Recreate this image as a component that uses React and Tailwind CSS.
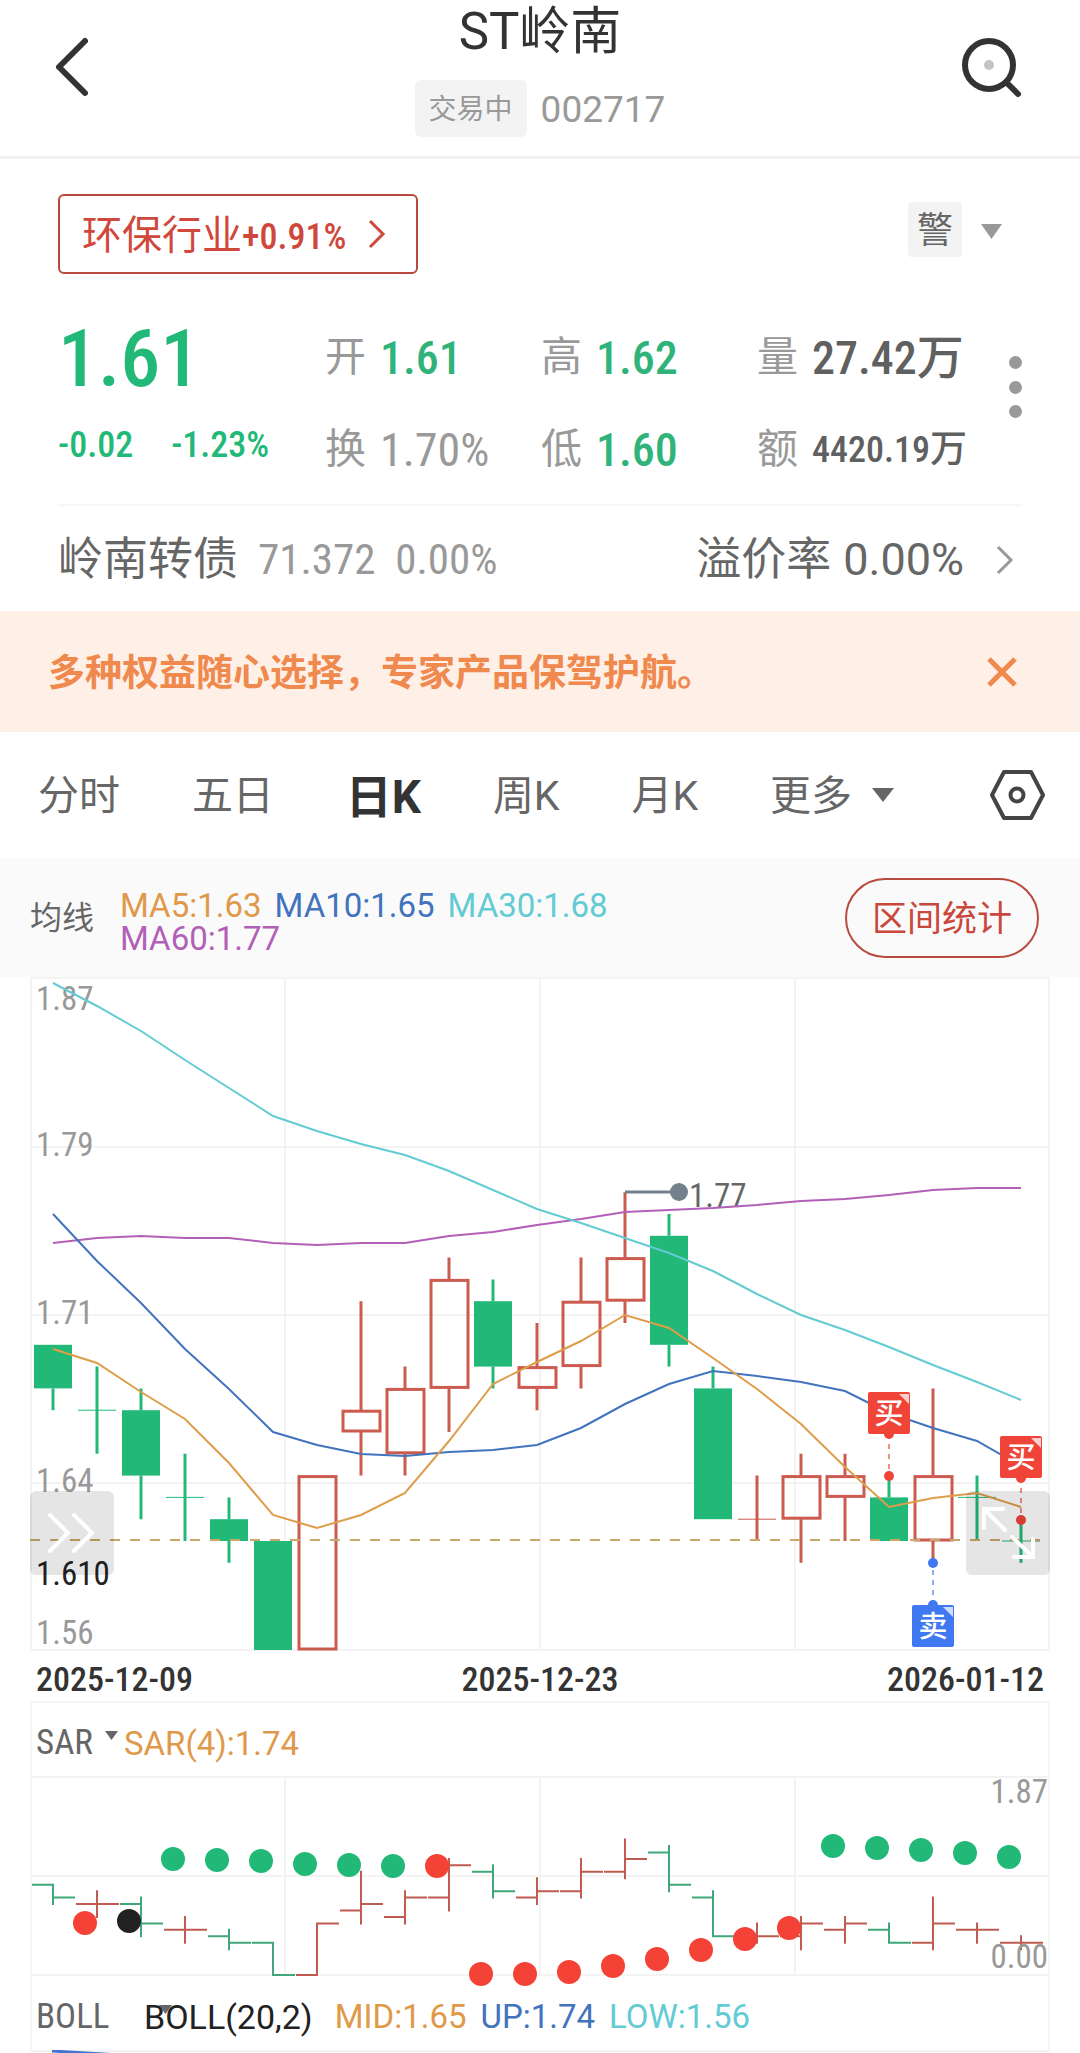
import React from 'react';

const NUM = "[font-family:'Roboto_Condensed','Noto_Sans_CJK_SC',sans-serif]";

const GREEN = '#22b978';
const RED = '#cb5a4f';
const DOT_RED = '#f44336';

const quotes = [
  { label: '开', value: '1.61', color: 'text-[#2fb37b] font-medium' },
  { label: '高', value: '1.62', color: 'text-[#2fb37b] font-medium' },
  { label: '量', value: '27.42', unit: '万', color: 'text-[#606060] font-medium' },
  { label: '换', value: '1.70%', color: 'text-[#999999]' },
  { label: '低', value: '1.60', color: 'text-[#2fb37b] font-medium' },
  { label: '额', value: '4420.19', unit: '万', color: 'text-[#606060] font-medium', small: true },
];

const tabs = ['分时', '五日', '日K', '周K', '月K'];

// open, close, high, low in cents; flat days carry their own direction
const days = [
  [170, 168, 170, 167],
  [167, 167, 169, 165, 'down'],
  [167, 164, 168, 162],
  [163, 163, 165, 161, 'down'],
  [162, 161, 163, 160],
  [161, 156, 161, 156],
  [156, 164, 164, 156],
  [166, 167, 172, 164],
  [165, 168, 169, 164],
  [168, 173, 174, 166],
  [172, 169, 173, 168],
  [168, 169, 171, 167],
  [169, 172, 174, 168],
  [172, 174, 177, 171],
  [175, 170, 176, 169],
  [168, 162, 169, 162],
  [162, 162, 164, 161, 'up'],
  [162, 164, 165, 160],
  [163, 164, 165, 161],
  [163, 161, 164, 161],
  [161, 164, 168, 160],
  [163, 163, 164, 161, 'down'],
  [161, 161, 162, 160, 'down'],
];

const averages = [
  { color: '#b25fb8', points: [266, 261, 259, 261, 261, 266, 268, 266, 266, 259, 255, 248, 242, 235, 233, 231, 228, 224, 222, 218, 213, 211, 211] },
  { color: '#62cbd3', points: [6, 29, 54, 83, 111, 139, 154, 167, 178, 194, 213, 232, 246, 261, 276, 294, 317, 338, 353, 370, 388, 405, 423] },
  { color: '#4273bd', points: [237, 284, 326, 372, 412, 455, 468, 477, 479, 475, 473, 468, 451, 427, 407, 394, 399, 405, 414, 436, 451, 464, 489] },
  { color: '#de9d4a', points: [372, 386, 415, 442, 486, 538, 551, 538, 516, 464, 407, 385, 364, 338, 351, 381, 412, 447, 490, 530, 521, 516, 530] },
];

const sarDots = [
  null,
  [147, DOT_RED],
  [145, '#222222'],
  [83, GREEN],
  [84, GREEN],
  [85, GREEN],
  [88, GREEN],
  [89, GREEN],
  [90, GREEN],
  [90, DOT_RED],
  [198, DOT_RED],
  [198, DOT_RED],
  [196, DOT_RED],
  [190, DOT_RED],
  [183, DOT_RED],
  [174, DOT_RED],
  [163, DOT_RED],
  [152, DOT_RED],
  [70, GREEN],
  [72, GREEN],
  [74, GREEN],
  [77, GREEN],
  [81, GREEN],
];

const dayX = (i) => 23 + i * 44;
const priceY = (cents) => 673 - (cents - 156) * 21.8;
const sarY = (cents) => 199 - (cents - 156) * 6.45;

export default function App() {
  return (
    <div className="w-full overflow-hidden bg-white [font-family:Roboto,'Noto_Sans_CJK_SC',sans-serif] text-[#666666]">
      <Header />
      <Summary />
      <Banner />
      <PeriodTabs />
      <AverageLegend />
      <main className="px-[30px]">
        <CandleChart />
        <div className={`${NUM} flex h-[50px] items-center justify-between px-[6px] pt-[6px] text-[34px] font-medium text-[#333333]`}>
          <span>2025-12-09</span>
          <span>2025-12-23</span>
          <span>2026-01-12</span>
        </div>
        <section className="border-x-2 border-t-2 border-[#f5f5f5]">
          <SarPanel />
          <BollPanel />
        </section>
      </main>
    </div>
  );
}

function Header() {
  return (
    <header className="flex h-[159px] items-start justify-between border-b-[3px] border-[#f2f2f2] px-[54px]">
      <button aria-label="返回" className="mt-[36px] flex w-[70px]">
        <svg width="38" height="62" viewBox="0 0 38 62" fill="none" stroke="#333333" strokeWidth="6" strokeLinecap="round" strokeLinejoin="round">
          <path d="M31 5 L5 31 L31 57" />
        </svg>
      </button>
      <div className="flex flex-col items-center">
        <h1 className="text-[51px] leading-[64px] text-[#333333]">ST岭南</h1>
        <div className="mt-4 flex items-center gap-[14px] text-[#999999]">
          <span className="flex h-[57px] items-center rounded-md bg-[#f3f3f3] px-[14px] pt-[2px] text-[28px]">交易中</span>
          <span className="pt-[2px] text-[37px]">002717</span>
        </div>
      </div>
      <button aria-label="搜索" className="mt-[36px] flex w-[70px] justify-end">
        <svg width="64" height="64" viewBox="0 0 64 64" fill="none" stroke="#333333" strokeLinecap="round">
          <circle cx="27" cy="29" r="24" strokeWidth="6" />
          <path d="M45 47 L56 58" strokeWidth="6" />
          <circle cx="27" cy="29" r="5" fill="#c4c4c4" stroke="none" />
        </svg>
      </button>
    </header>
  );
}

function Summary() {
  return (
    <section className="px-[58px] pt-[35px]">
      <div className="flex items-start justify-between">
        <a href="#industry" className="flex h-[80px] items-center rounded-md border-2 border-[#b9493d] pr-[30px] pl-[22px] text-[#d0473b]">
          <span className="pt-1 text-[40px]">环保行业</span>
          <span className={`${NUM} pt-[6px] text-[36px] font-medium`}>+0.91%</span>
          <svg className="ml-[22px]" width="18" height="30" viewBox="0 0 18 30" fill="none" stroke="currentColor" strokeWidth="3">
            <path d="M2 2 L15 15 L2 28" />
          </svg>
        </a>
        <button aria-label="预警" className="mt-2 mr-[20px] flex items-center gap-[19px]">
          <span className="flex h-[55px] w-[54px] items-center justify-center rounded-sm bg-[#f3f3f3] pt-[3px] text-[36px]">警</span>
          <Triangle className="mt-1 h-[15px] w-[21px] text-[#999999]" />
        </button>
      </div>

      <div className="mt-9 flex h-[194px] justify-between">
        <div className={`${NUM} w-[267px] text-[#22b978]`}>
          <div className="flex h-[98px] items-center text-[80px] leading-none font-medium">1.61</div>
          <div className="flex h-[74px] items-center gap-[38px] text-[36px] font-medium">
            <span>-0.02</span>
            <span>-1.23%</span>
          </div>
        </div>
        <dl className="grid flex-1 grid-cols-[216fr_216fr_252fr] grid-rows-[92px_92px] pt-[2px]">
          {quotes.map((q) => (
            <div key={q.label} className="flex items-center gap-[14px] whitespace-nowrap">
              <dt className="text-[41px] text-[#999999]">{q.label}</dt>
              <dd className={`${NUM} ${q.color} flex items-center`}>
                <span className={q.small ? 'text-[36px]' : 'text-[46px]'}>{q.value}</span>
                {q.unit && <span className={q.small ? 'text-[37px]' : 'text-[47px]'}>{q.unit}</span>}
              </dd>
            </div>
          ))}
        </dl>
        <button aria-label="更多数据" className="mt-[46px] flex h-[62px] flex-col justify-between">
          <span className="size-[13px] rounded-full bg-[#999999]" />
          <span className="size-[13px] rounded-full bg-[#999999]" />
          <span className="size-[13px] rounded-full bg-[#999999]" />
        </button>
      </div>

      <a href="#bond" className="flex h-[107px] items-center justify-between border-t-2 border-[#f7f7f7]">
        <span className="flex items-center gap-5 pt-[2px]">
          <span className="text-[45px]">岭南转债</span>
          <span className={`${NUM} text-[43px] text-[#999999]`}>71.372&nbsp; 0.00%</span>
        </span>
        <span className="flex items-center gap-3 pr-[8px] pt-[2px]">
          <span className="text-[45px]">溢价率</span>
          <span className="text-[45px]">0.00%</span>
          <svg className="ml-5" width="18" height="30" viewBox="0 0 18 30" fill="none" stroke="#999999" strokeWidth="3">
            <path d="M2 2 L15 15 L2 28" />
          </svg>
        </span>
      </a>
    </section>
  );
}

function Banner() {
  return (
    <aside className="flex h-[121px] items-center justify-between bg-[#fff0e7] pr-[63px] pl-12 text-[#f0894e]">
      <p className="pt-1 text-[37px] font-bold">多种权益随心选择，专家产品保驾护航。</p>
      <button aria-label="关闭">
        <svg width="30" height="30" viewBox="0 0 30 30" fill="none" stroke="currentColor" strokeWidth="5">
          <path d="M2 2 L28 28 M28 2 L2 28" />
        </svg>
      </button>
    </aside>
  );
}

function PeriodTabs() {
  return (
    <nav className="flex h-[126px] items-center justify-between pr-[35px] pl-[38px] text-[41px]">
      {tabs.map((tab) => (
        <button key={tab} className={tab === '日K' ? 'pt-1 text-[46px] font-bold text-[#333333]' : 'pt-1'}>
          {tab}
        </button>
      ))}
      <button className="flex items-center gap-5">
        <span className="pt-1">更多</span>
        <Triangle className="h-[14px] w-[22px]" />
      </button>
      <button aria-label="设置" className="ml-[24px]">
        <svg width="55" height="52" viewBox="0 0 55 52" fill="none" stroke="#444444" strokeWidth="4" strokeLinejoin="round">
          <path d="M14 3 H41 L53 26 L41 49 H14 L2 26 Z" />
          <circle cx="27" cy="26" r="6.5" />
        </svg>
      </button>
    </nav>
  );
}

function AverageLegend() {
  return (
    <section className="flex h-[119px] items-center bg-[#fafafa] pr-[41px] pl-[30px]">
      <span className="text-[32px]">均线</span>
      <p className="ml-[26px] flex w-[520px] flex-wrap gap-x-[13px] pt-[9px] text-[33px] leading-[33px]">
        <span className="text-[#e0994a]">MA5:1.63</span>
        <span className="text-[#4273bd]">MA10:1.65</span>
        <span className="text-[#62cbd3]">MA30:1.68</span>
        <span className="text-[#b25fb8]">MA60:1.77</span>
      </p>
      <button className="ml-auto h-[80px] rounded-full border-2 border-[#b9493d] px-[25px] pt-[6px] text-[35px] text-[#c9473b]">
        区间统计
      </button>
    </section>
  );
}

function CandleChart() {
  return (
    <section className="relative">
      <svg className={`${NUM} block h-auto w-full`} viewBox="0 0 1020 674">
        <g fill="none" stroke="#f3f3f3" strokeWidth="2">
          <rect x="1" y="1" width="1018" height="672" />
          <path d="M0 170 H1020 M0 338 H1020 M0 506 H1020 M255 0 V674 M510 0 V674 M765 0 V674" />
        </g>

        {days.map((day, i) => (
          <Candle key={i} x={dayX(i)} day={day} />
        ))}

        <g fontSize="33" fill="#999999">
          <text x="6" y="33">1.87</text>
          <text x="6" y="179">1.79</text>
          <text x="6" y="347">1.71</text>
          <text x="6" y="515">1.64</text>
          <text x="6" y="667">1.56</text>
          <text x="6" y="608" fill="#222222">1.610</text>
          <text x="659" y="230" fill="#666666">1.77</text>
        </g>
        <path d="M595 215 H648" stroke="#74808c" strokeWidth="3" />
        <circle cx="649" cy="215" r="9" fill="#74808c" />

        {averages.map((line) => (
          <polyline
            key={line.color}
            points={line.points.map((y, i) => `${dayX(i)},${y}`).join(' ')}
            fill="none"
            stroke={line.color}
            strokeWidth="2"
          />
        ))}
        <path d="M0 563 H1020" stroke="#c9a66a" strokeWidth="2" strokeDasharray="10 10" />

        <TradeMark x={859} dotY={499} boxY={415} label="买" color="#f04438" />
        <TradeMark x={991} dotY={543} boxY={459} label="买" color="#f04438" />
        <TradeMark x={903} dotY={586} boxY={628} label="卖" color="#3f78f0" />
      </svg>

      <button aria-label="快进" className="absolute bottom-[76px] left-0 flex size-[84px] items-center justify-center rounded-md bg-black/10">
        <svg width="52" height="42" viewBox="0 0 52 42" fill="none" stroke="#ffffff" strokeWidth="4" strokeLinecap="round">
          <path d="M4 3 L22 21 L4 39 M28 3 L46 21 L28 39" />
        </svg>
      </button>
      <button aria-label="全屏" className="absolute right-0 bottom-[76px] flex size-[84px] items-center justify-center rounded-md bg-black/10">
        <svg width="54" height="54" viewBox="0 0 54 54" fill="none" stroke="#ffffff" strokeWidth="4" strokeLinecap="round">
          <path d="M3 22 V3 H22 M3 3 L24 24 M31 31 L52 51 M52 33 V51 H33" />
        </svg>
      </button>
    </section>
  );
}

function Candle({ x, day }) {
  const [open, close, high, low, flat] = day;
  const up = flat ? flat === 'up' : close > open;
  const color = up ? RED : GREEN;
  const top = priceY(Math.max(open, close));
  const bottom = priceY(Math.min(open, close));

  return (
    <g stroke={color}>
      <path d={`M${x} ${priceY(high)} V${top} M${x} ${bottom} V${priceY(low)}`} strokeWidth="3" />
      {flat ? (
        <path d={`M${x - 19} ${top} H${x + 19}`} strokeWidth="1" />
      ) : up ? (
        <rect x={x - 18} y={top + 1} width="37" height={bottom - top - 2} fill="none" strokeWidth="3" />
      ) : (
        <rect x={x - 19} y={top} width="38" height={bottom - top} fill={color} stroke="none" />
      )}
    </g>
  );
}

function TradeMark({ x, dotY, boxY, label, color }) {
  const edgeY = boxY > dotY ? boxY : boxY + 42;
  return (
    <g>
      <path d={`M${x} ${edgeY} V${dotY}`} stroke={color} strokeWidth="2" strokeDasharray="5 5" opacity="0.6" />
      <rect x={x - 21} y={boxY} width="42" height="42" rx="2" fill={color} />
      <circle cx={x} cy={edgeY} r="5" fill={color} />
      <circle cx={x} cy={dotY} r="5" fill={color} />
      <path d={`M${x + 10} ${boxY + 2} H${x + 20} V${boxY + 12} Z`} fill="#ffffff" opacity="0.75" />
      <text x={x} y={boxY + 32} fontSize="29" fontWeight="500" fill="#ffffff" textAnchor="middle">{label}</text>
    </g>
  );
}

function SarPanel() {
  return (
    <div>
      <div className="flex h-[73px] items-center pt-2 pl-1">
        <label className="relative flex items-center">
          <select aria-label="指标" className={`${NUM} w-[82px] appearance-none text-[35px] text-[#666666]`}>
            <option>SAR</option>
          </select>
          <Triangle className="pointer-events-none absolute top-[14px] right-0 h-[9px] w-[13px]" />
        </label>
        <span className="ml-[6px] text-[33px] text-[#e0994a]">SAR(4):1.74</span>
      </div>
      <svg className={`${NUM} relative -mx-[2px] block h-auto w-[calc(100%+4px)] overflow-visible`} viewBox="0 0 1020 200">
        <path
          d="M0 1 H1020 M0 100 H1020 M0 199 H1020 M255 0 V200 M510 0 V200 M765 0 V200"
          fill="none"
          stroke="#f3f3f3"
          strokeWidth="2"
        />
        {days.map(([open, close, high, low], i) => (
          <path
            key={i}
            d={`M${dayX(i) - 20} ${sarY(open)} H${dayX(i)} M${dayX(i)} ${sarY(high)} V${sarY(low)} M${dayX(i)} ${sarY(close)} H${dayX(i) + 21}`}
            stroke={close < open ? '#3fa77a' : '#bf5b50'}
            strokeWidth="2"
            strokeLinecap="square"
          />
        ))}
        {sarDots.map((dot, i) => dot && <circle key={i} cx={dayX(i) - 12} cy={dot[0]} r="12" fill={dot[1]} />)}
        <g fontSize="33" fill="#999999" textAnchor="end">
          <text x="1018" y="27">1.87</text>
          <text x="1018" y="192">0.00</text>
        </g>
      </svg>
    </div>
  );
}

function BollPanel() {
  return (
    <div>
      <div className="flex h-[74px] items-center pt-2 pl-1 text-[33px] whitespace-nowrap">
        <label className="relative flex items-center">
          <select aria-label="指标" className={`${NUM} w-[108px] appearance-none text-[35px] text-[#666666]`}>
            <option>BOLL</option>
          </select>
          <Triangle className="pointer-events-none absolute top-[14px] -right-[28px] h-[9px] w-[13px]" />
        </label>
        <span className="text-[34px] text-[#222222]">BOLL(20,2)</span>
        <span className="ml-[22px] text-[#e0994a]">MID:1.65</span>
        <span className="ml-[14px] text-[#4273bd]">UP:1.74</span>
        <span className="ml-[14px] text-[#62cbd3]">LOW:1.56</span>
      </div>
      <svg className="block h-[4px] w-full" viewBox="0 0 1016 4">
        <path d="M0 1 H1016" stroke="#f3f3f3" strokeWidth="2" />
        <path d="M20 1 L88 5" stroke="#4273d0" strokeWidth="3" />
      </svg>
    </div>
  );
}

function Triangle({ className }) {
  return (
    <svg className={className} viewBox="0 0 22 14" preserveAspectRatio="none" fill="currentColor">
      <path d="M0 0 H22 L11 14 Z" />
    </svg>
  );
}
